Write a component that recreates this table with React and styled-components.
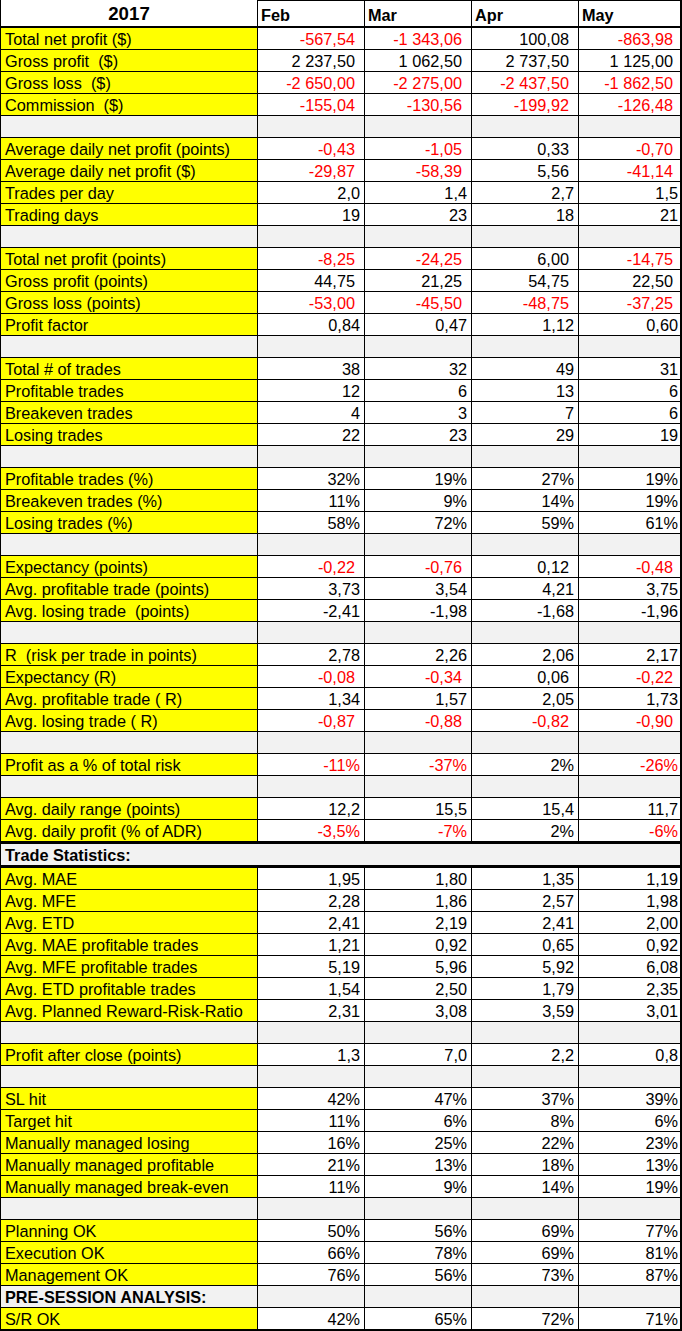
import React from "react";
import styled, { createGlobalStyle } from "styled-components";

const GlobalStyle = createGlobalStyle`
  * { box-sizing: border-box; }
  body {
    margin: 0;
    background: #fff;
    font-family: "Liberation Sans", Arial, sans-serif;
    color: #000;
  }
`;

const months = ["Feb", "Mar", "Apr", "May"];

// wide: number format with a trailing space, red: negatives shown in red
const rows = [
  { label: "Total net profit ($)", values: ["-567,54", "-1 343,06", "100,08", "-863,98"], wide: true, red: true },
  { label: "Gross profit  ($)", values: ["2 237,50", "1 062,50", "2 737,50", "1 125,00"], wide: true, red: true },
  { label: "Gross loss  ($)", values: ["-2 650,00", "-2 275,00", "-2 437,50", "-1 862,50"], wide: true, red: true },
  { label: "Commission  ($)", values: ["-155,04", "-130,56", "-199,92", "-126,48"], wide: true, red: true },
  { blank: true },
  { label: "Average daily net profit (points)", values: ["-0,43", "-1,05", "0,33", "-0,70"], wide: true, red: true },
  { label: "Average daily net profit ($)", values: ["-29,87", "-58,39", "5,56", "-41,14"], wide: true, red: true },
  { label: "Trades per day", values: ["2,0", "1,4", "2,7", "1,5"] },
  { label: "Trading days", values: ["19", "23", "18", "21"] },
  { blank: true },
  { label: "Total net profit (points)", values: ["-8,25", "-24,25", "6,00", "-14,75"], wide: true, red: true },
  { label: "Gross profit (points)", values: ["44,75", "21,25", "54,75", "22,50"], wide: true, red: true },
  { label: "Gross loss (points)", values: ["-53,00", "-45,50", "-48,75", "-37,25"], wide: true, red: true },
  { label: "Profit factor", values: ["0,84", "0,47", "1,12", "0,60"] },
  { blank: true },
  { label: "Total # of trades", values: ["38", "32", "49", "31"] },
  { label: "Profitable trades", values: ["12", "6", "13", "6"] },
  { label: "Breakeven trades", values: ["4", "3", "7", "6"] },
  { label: "Losing trades", values: ["22", "23", "29", "19"] },
  { blank: true },
  { label: "Profitable trades (%)", values: ["32%", "19%", "27%", "19%"] },
  { label: "Breakeven trades (%)", values: ["11%", "9%", "14%", "19%"] },
  { label: "Losing trades (%)", values: ["58%", "72%", "59%", "61%"] },
  { blank: true },
  { label: "Expectancy (points)", values: ["-0,22", "-0,76", "0,12", "-0,48"], wide: true, red: true },
  { label: "Avg. profitable trade (points)", values: ["3,73", "3,54", "4,21", "3,75"] },
  { label: "Avg. losing trade  (points)", values: ["-2,41", "-1,98", "-1,68", "-1,96"] },
  { blank: true },
  { label: "R  (risk per trade in points)", values: ["2,78", "2,26", "2,06", "2,17"] },
  { label: "Expectancy (R)", values: ["-0,08", "-0,34", "0,06", "-0,22"], wide: true, red: true },
  { label: "Avg. profitable trade ( R)", values: ["1,34", "1,57", "2,05", "1,73"] },
  { label: "Avg. losing trade ( R)", values: ["-0,87", "-0,88", "-0,82", "-0,90"], wide: true, red: true },
  { blank: true },
  { label: "Profit as a % of total risk", values: ["-11%", "-37%", "2%", "-26%"], red: true },
  { blank: true },
  { label: "Avg. daily range (points)", values: ["12,2", "15,5", "15,4", "11,7"] },
  { label: "Avg. daily profit (% of ADR)", values: ["-3,5%", "-7%", "2%", "-6%"], red: true, thick: true },
  { section: "Trade Statistics:" },
  { label: "Avg. MAE", values: ["1,95", "1,80", "1,35", "1,19"] },
  { label: "Avg. MFE", values: ["2,28", "1,86", "2,57", "1,98"] },
  { label: "Avg. ETD", values: ["2,41", "2,19", "2,41", "2,00"] },
  { label: "Avg. MAE profitable trades", values: ["1,21", "0,92", "0,65", "0,92"] },
  { label: "Avg. MFE profitable trades", values: ["5,19", "5,96", "5,92", "6,08"] },
  { label: "Avg. ETD profitable trades", values: ["1,54", "2,50", "1,79", "2,35"] },
  { label: "Avg. Planned Reward-Risk-Ratio", values: ["2,31", "3,08", "3,59", "3,01"] },
  { blank: true },
  { label: "Profit after close (points)", values: ["1,3", "7,0", "2,2", "0,8"] },
  { blank: true },
  { label: "SL hit", values: ["42%", "47%", "37%", "39%"] },
  { label: "Target hit", values: ["11%", "6%", "8%", "6%"] },
  { label: "Manually managed losing", values: ["16%", "25%", "22%", "23%"] },
  { label: "Manually managed profitable", values: ["21%", "13%", "18%", "13%"] },
  { label: "Manually managed break-even", values: ["11%", "9%", "14%", "19%"] },
  { blank: true },
  { label: "Planning OK", values: ["50%", "56%", "69%", "77%"] },
  { label: "Execution OK", values: ["66%", "78%", "69%", "81%"] },
  { label: "Management OK", values: ["76%", "56%", "73%", "87%"] },
  { sub: "PRE-SESSION ANALYSIS:" },
  { label: "S/R OK", values: ["42%", "65%", "72%", "71%"], last: true },
];

export default function App() {
  return (
    <>
      <GlobalStyle />
      <Sheet>
        <HeaderRow>
          <YearCell>2017</YearCell>
          {months.map((m, i) => (
            <MonthCell key={m} $last={i === 3}>
              {m}
            </MonthCell>
          ))}
        </HeaderRow>

        {rows.map((row, idx) => {
          if (row.section) {
            return (
              <SectionRow key={idx}>
                <SectionCell>{row.section}</SectionCell>
              </SectionRow>
            );
          }

          const grey = row.blank || row.sub;
          const border = row.thick ? 3 : row.last ? 2 : 1;

          return (
            <Row key={idx} $border={border}>
              <LabelCell $grey={grey} $bold={!!row.sub} $border={border}>
                {row.sub || row.label || ""}
              </LabelCell>
              {[0, 1, 2, 3].map((i) => {
                const v = row.values ? row.values[i] : "";
                const negative = v.startsWith("-");
                return (
                  <ValueCell
                    key={i}
                    $grey={grey}
                    $wide={row.wide}
                    $red={row.red && negative}
                    $last={i === 3}
                    $border={border}
                  >
                    {v}
                  </ValueCell>
                );
              })}
            </Row>
          );
        })}
      </Sheet>
    </>
  );
}

const columns = "257px 107px 107px 107px 103px";

const Sheet = styled.div`
  width: 682px;
  border-left: 1px solid #000;
  font-size: 16.3px;
`;

const HeaderRow = styled.div`
  display: grid;
  grid-template-columns: ${columns};
  height: 28px;
`;

const YearCell = styled.div`
  background: #fff;
  border-right: 1px solid #000;
  border-bottom: 2px solid #000;
  text-align: center;
  font-weight: bold;
  font-size: 18.7px;
  line-height: 21px;
  padding-top: 3px;
`;

const MonthCell = styled.div`
  background: #fff;
  border-top: 1px solid #000;
  border-right: ${(p) => (p.$last ? 2 : 1)}px solid #000;
  border-bottom: 2px solid #000;
  font-weight: bold;
  line-height: 19px;
  padding: 5px 0 0 3px;
`;

const Row = styled.div`
  display: grid;
  grid-template-columns: ${columns};
  height: ${(p) => 21 + p.$border}px;
`;

const LabelCell = styled.div`
  background: ${(p) => (p.$grey ? "#f2f2f2" : "#ffff00")};
  border-right: 1px solid #000;
  border-bottom: ${(p) => p.$border}px solid #000;
  font-weight: ${(p) => (p.$bold ? "bold" : "normal")};
  line-height: 19px;
  padding: 2px 0 0 4px;
  white-space: pre;
  overflow: hidden;
`;

const ValueCell = styled.div`
  background: ${(p) => (p.$grey ? "#f2f2f2" : "#fff")};
  color: ${(p) => (p.$red ? "#ff0000" : "#000")};
  border-right: ${(p) => (p.$last ? 2 : 1)}px solid #000;
  border-bottom: ${(p) => p.$border}px solid #000;
  text-align: right;
  line-height: 19px;
  padding-top: 2px;
  padding-right: ${(p) => (p.$wide ? 9 : 4) - (p.$last ? 2 : 0)}px;
  white-space: pre;
`;

const SectionRow = styled.div`
  display: flex;
  height: 24px;
`;

const SectionCell = styled.div`
  flex: 1;
  background: #f2f2f2;
  border-right: 2px solid #000;
  border-bottom: 3px solid #000;
  font-weight: bold;
  line-height: 19px;
  padding: 2px 0 0 4px;
`;
